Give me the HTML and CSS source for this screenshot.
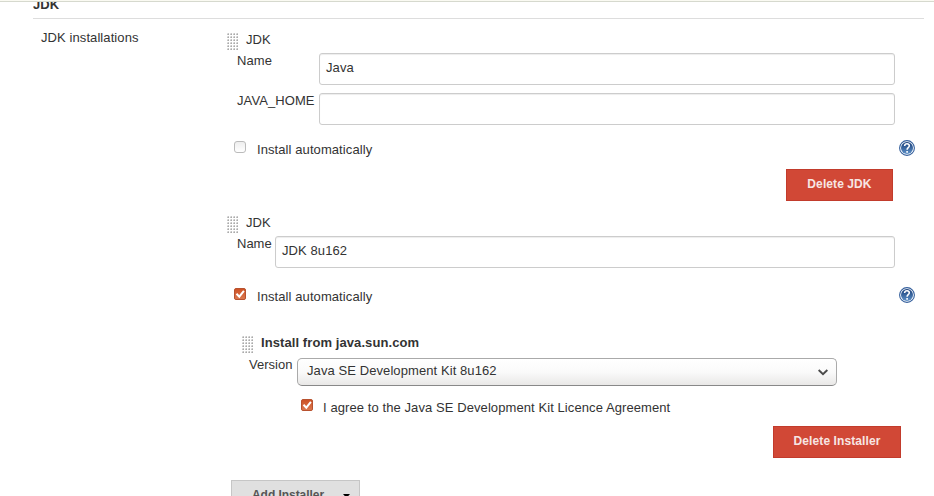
FILE: index.html
```html
<!DOCTYPE html>
<html lang="en">
<head>
<meta charset="utf-8">
<title>Global Tool Configuration</title>
<link rel="stylesheet" href="styles.css">
</head>
<body>
<svg class="defs" width="0" height="0" aria-hidden="true">
  <defs>
    <pattern id="dots" width="3" height="3" patternUnits="userSpaceOnUse"><path d="M0 0h2v2H0z" fill="#e2e2e2"/><path d="M1 0h1v1H1zM0 1h1v1H0z" fill="#c6c6c6"/><path d="M1 1h1v1H1z" fill="#aaa"/></pattern>
    <linearGradient id="blue" x2="0" y2="1"><stop stop-color="#183d78"/><stop offset="1" stop-color="#5e91c8"/></linearGradient>
    <linearGradient id="orange" x2="0" y2="1"><stop stop-color="#cc4f22"/><stop offset="1" stop-color="#dc7b52"/></linearGradient>
    <symbol id="grip" viewBox="0 0 11 17"><rect width="11" height="17" fill="url(#dots)"/></symbol>
    <symbol id="help" viewBox="0 0 16 16"><circle cx="8" cy="8" r="7.4" fill="#fff" stroke="#345f9c" stroke-width="1.1"/><circle cx="8" cy="8" r="6" fill="url(#blue)"/><path d="M5.600 6C5.800 2.900 10.600 3.200 10.300 6C10.100 7.600 8.100 7.700 8.100 9.700M8.100 11v1.700" fill="none" stroke="#fff" stroke-width="1.600"/></symbol>
    <symbol id="checked" viewBox="0 0 12 12"><rect x=".5" y=".5" width="11" height="11" rx="1.500" fill="url(#orange)" stroke="#b8522f"/><path d="M2.500 5.800l2.800 2.900L9.900 2.900" fill="none" stroke="#fff" stroke-width="2"/></symbol>
  </defs>
</svg>
<main class="page">
  <h2 class="section-title">JDK</h2>
  <div class="columns">
    <div class="setting-name">JDK installations</div>
    <div class="installations">
      <section class="jdk">
        <div class="heading"><svg class="grip"><use href="#grip"/></svg><span>JDK</span></div>
        <div class="field"><label class="wide">Name</label><div class="input">Java</div></div>
        <div class="field second"><label class="wide">JAVA_HOME</label><div class="input"></div></div>
        <div class="option"><span class="box"></span><span>Install automatically</span><svg class="help"><use href="#help"/></svg></div>
        <button class="danger delete-jdk">Delete JDK</button>
      </section>
      <section class="jdk next">
        <div class="heading"><svg class="grip"><use href="#grip"/></svg><span>JDK</span></div>
        <div class="field"><label>Name</label><div class="input">JDK 8u162</div></div>
        <div class="option"><svg class="check"><use href="#checked"/></svg><span>Install automatically</span><svg class="help"><use href="#help"/></svg></div>
        <div class="installer">
          <div class="heading strong"><svg class="grip"><use href="#grip"/></svg><span>Install from java.sun.com</span></div>
          <div class="version"><label>Version</label><div class="select"><span>Java SE Development Kit 8u162</span><svg class="chevron" viewBox="0 0 10 7"><path d="M.6 1L5 5.200L9.400 1" fill="none" stroke="#4a4a4a" stroke-width="2"/></svg></div></div>
          <div class="agree"><svg class="check"><use href="#checked"/></svg><span>I agree to the Java SE Development Kit Licence Agreement</span></div>
          <button class="danger delete-installer">Delete Installer</button>
        </div>
        <button class="add"><span>Add Installer</span><svg class="caret" viewBox="0 0 7 4"><path d="M0 0h7L3.500 4z"/></svg></button>
      </section>
    </div>
  </div>
</main>
</body>
</html>
```
FILE: styles.css
```css
* { box-sizing: border-box; }
html, body { height: 100%; }
body {
  margin: 0;
  overflow: hidden;
  background: #fff;
  color: #333;
  font: 13px/16px "Liberation Sans", Arial, sans-serif;
  letter-spacing: .085px;
}
svg { display: block; flex: none; }
.defs { position: absolute; }
.page { height: 496px; overflow: hidden; border-top: 1px solid #fafaf2; }
.page::before { content: ""; display: block; height: 1px; background: #d6d9ce; }
.section-title {
  margin: 0 10px 0 33px;
  height: 17px;
  border-bottom: 1px solid #ddd;
  font-size: 13px;
  line-height: 6px;
  overflow: hidden;
}
.columns { display: grid; grid-template-columns: 186px 1fr; padding: 11px 0 0 41px; }
.installations { padding-top: 2px; }
.heading { display: flex; height: 21px; }
.heading .grip { margin-top: 1px; }
.heading span { margin-left: 8px; }
.grip { width: 11px; height: 17px; }
.field { display: flex; height: 32px; padding-left: 10px; }
.field.second { margin-top: 8px; }
.field label { width: 38px; white-space: nowrap; letter-spacing: 0; }
.field label.wide { width: 82px; letter-spacing: .085px; }
.input {
  flex: none;
  width: 620px;
  height: 32px;
  border: 1px solid #ccc;
  border-radius: 3px;
  padding: 6px;
  box-shadow: inset 0 1px 1px rgba(0, 0, 0, .075);
}
.wide + .input { width: 576px; }
.option { display: flex; height: 16px; margin-top: 17px; padding-left: 7px; }
.field:not(.second) + .option { margin-top: 21px; }
.option span:not(.box) { margin-left: 11px; }
.check, .box { width: 12px; height: 12px; margin-top: -1px; }
.box { flex: none; border: 1px solid #bbb; border-radius: 3px; background: linear-gradient(#eee, #fff); }
.help { width: 16px; height: 16px; margin: -2px 19px 0 auto; }
.danger {
  display: block;
  height: 32px;
  padding: 0 0 2px;
  border: 1px solid #c23b2c;
  background: #d14836;
  color: #f7e5e3;
  font: bold 12px/28px "Liberation Sans", Arial, sans-serif;
  letter-spacing: .09px;
}
.delete-jdk { width: 107px; margin: 11px 0 0 559px; }
.next { margin-top: 14px; }
.installer { margin-top: 30px; padding-left: 15px; }
.strong { height: 22px; font-weight: bold; }
.version { display: flex; padding-left: 7px; }
.version label { width: 48px; letter-spacing: 0; }
.select {
  display: flex;
  justify-content: space-between;
  width: 540px;
  height: 28px;
  margin-top: 1px;
  padding: 4px 8px 0 9px;
  border: 1px solid #aaa;
  border-bottom-color: #888;
  border-radius: 5px;
  background: linear-gradient(#fff, #fafafa 50%, #e9e8e7);
}
.chevron { width: 10px; height: 7px; margin-top: 6px; }
.agree { display: flex; height: 16px; margin-top: 14px; padding-left: 59px; }
.agree span { margin-left: 10px; }
.delete-installer { width: 128px; margin: 10px 0 0 531px; }
.add {
  display: flex;
  width: 129px;
  height: 32px;
  margin: 22px 0 0 4px;
  padding: 6px 9px 0 20px;
  border: 1px solid #c6c6c6;
  background: #e0e0e0;
  color: #555;
  font: bold 12px/16px "Liberation Sans", Arial, sans-serif;
  letter-spacing: -.05px;
}
.caret { width: 7px; height: 4px; margin: 7px 0 0 auto; fill: #000; }
```
